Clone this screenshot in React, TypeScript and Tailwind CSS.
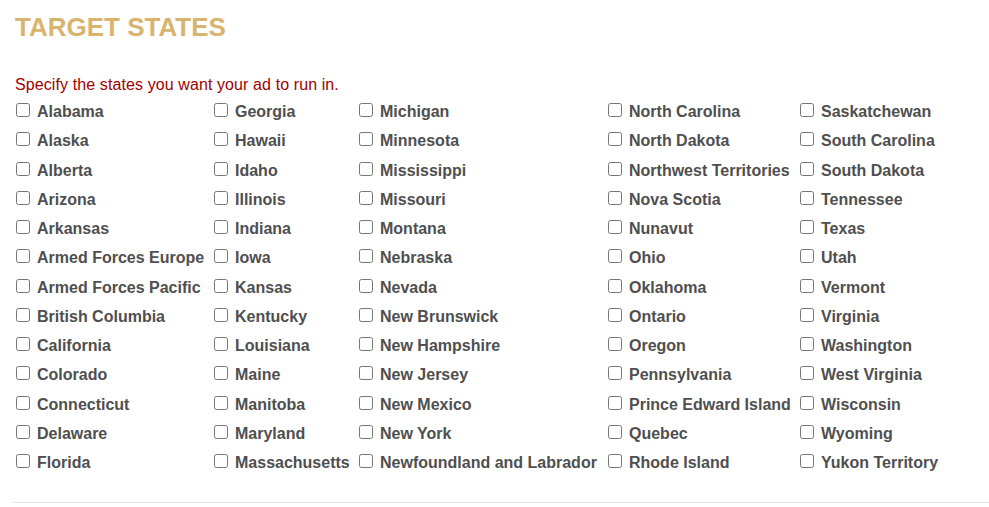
import React from 'react';

const columns: string[][] = [
  ['Alabama', 'Alaska', 'Alberta', 'Arizona', 'Arkansas', 'Armed Forces Europe', 'Armed Forces Pacific', 'British Columbia', 'California', 'Colorado', 'Connecticut', 'Delaware', 'Florida'],
  ['Georgia', 'Hawaii', 'Idaho', 'Illinois', 'Indiana', 'Iowa', 'Kansas', 'Kentucky', 'Louisiana', 'Maine', 'Manitoba', 'Maryland', 'Massachusetts'],
  ['Michigan', 'Minnesota', 'Mississippi', 'Missouri', 'Montana', 'Nebraska', 'Nevada', 'New Brunswick', 'New Hampshire', 'New Jersey', 'New Mexico', 'New York', 'Newfoundland and Labrador'],
  ['North Carolina', 'North Dakota', 'Northwest Territories', 'Nova Scotia', 'Nunavut', 'Ohio', 'Oklahoma', 'Ontario', 'Oregon', 'Pennsylvania', 'Prince Edward Island', 'Quebec', 'Rhode Island'],
  ['Saskatchewan', 'South Carolina', 'South Dakota', 'Tennessee', 'Texas', 'Utah', 'Vermont', 'Virginia', 'Washington', 'West Virginia', 'Wisconsin', 'Wyoming', 'Yukon Territory'],
];

const colWidths = ['w-[198px]', 'w-[145px]', 'w-[249px]', 'w-[192px]', 'w-[180px]'];

const App: React.FC = () => {
  return (
    <div className="w-[989px] h-[507px] bg-white font-['Liberation_Sans',Arial,sans-serif] overflow-hidden">
      <div className="pl-[15px] pt-[12px]">
        <h2 className="text-[26px] leading-[30px] font-bold text-[#d8b46e]">TARGET STATES</h2>
        <p className="mt-[34px] text-[16px] leading-[18px] text-[#a00000] tracking-[0.1px]">Specify the states you want your ad to run in.</p>
      </div>

      {/* state checkboxes, listed down each column */}
      <div className="flex pl-[16px] mt-[3.6px]">
        {columns.map((col, ci) => (
          <div key={ci} className={`flex flex-col ${colWidths[ci]}`}>
            {col.map((name) => (
              <label key={name} className="flex items-center h-[29.25px] text-[16px] font-bold text-[#4f4f4f] whitespace-nowrap">
                <input type="checkbox" className="m-0 mr-[7px] w-[14px] h-[14px] -translate-y-[2px]" />
                {name}
              </label>
            ))}
          </div>
        ))}
      </div>

      <div className="ml-[13px] mt-[24.4px] border-t border-[#e5e5e5]" />
    </div>
  );
};

export default App;
